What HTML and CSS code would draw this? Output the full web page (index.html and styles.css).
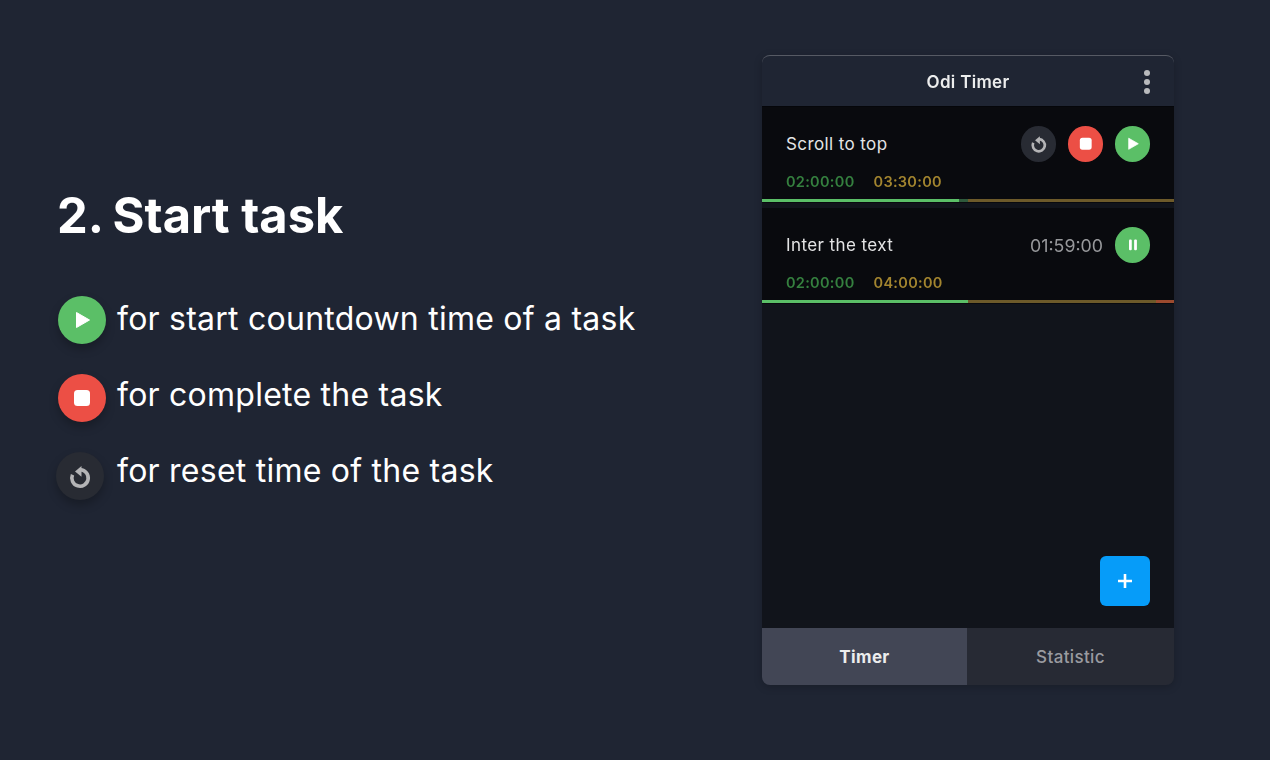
FILE: index.html
```html
<!DOCTYPE html>
<html lang="en">
<head>
<meta charset="UTF-8">
<title>Odi Timer - Start task</title>
<link rel="stylesheet" href="styles.css">
</head>
<body>

    <!-- Instructions -->
    <div class="intro">
        <h1 class="intro-title"><span class="intro-num">2.</span> Start task</h1>
        <div class="legend">
            <div class="legend-row">
                <span class="legend-icon legend-green">
                    <svg viewBox="0 0 48 48"><path d="M18.5 16.5v15L31.5 24z" fill="#fff" stroke="#fff" stroke-width="1" stroke-linejoin="round"/></svg>
                </span>
                <p>for start countdown time of a task</p>
            </div>
            <div class="legend-row">
                <span class="legend-icon legend-red">
                    <svg viewBox="0 0 48 48"><rect x="16" y="16" width="16" height="16" rx="3.5" fill="#fff"/></svg>
                </span>
                <p>for complete the task</p>
            </div>
            <div class="legend-row">
                <span class="legend-icon legend-grey">
                    <svg viewBox="0 0 48 48"><path d="M16.5 22.7A8.2 8.2 0 1 0 24.5 17.8" fill="none" stroke="#b4b4b6" stroke-width="3.6"/><path d="M25.5 14v10.7l-6.5-5.3z" fill="#b4b4b6"/></svg>
                </span>
                <p>for reset time of the task</p>
            </div>
        </div>
    </div>

    <!-- App window -->
    <div class="app">
        <div class="app-header">
            <span class="app-title">Odi Timer</span>
            <span class="app-menu"><i></i><i></i><i></i></span>
        </div>
        <div class="app-list">
            <div class="task">
                <div class="task-top">
                    <span class="task-name">Scroll to top</span>
                    <div class="task-actions">
                        <span class="btn btn-grey">
                            <svg viewBox="0 0 48 48"><path d="M16.5 22.7A8.2 8.2 0 1 0 24.5 17.8" fill="none" stroke="#b4b4b6" stroke-width="3.6"/><path d="M25.5 14v10.7l-6.5-5.3z" fill="#b4b4b6"/></svg>
                        </span>
                        <span class="btn btn-red">
                            <svg viewBox="0 0 48 48"><rect x="16" y="16" width="16" height="16" rx="3.5" fill="#fff"/></svg>
                        </span>
                        <span class="btn btn-green">
                            <svg viewBox="0 0 48 48"><path d="M18.5 16.5v15L31.5 24z" fill="#fff" stroke="#fff" stroke-width="1" stroke-linejoin="round"/></svg>
                        </span>
                    </div>
                </div>
                <div class="task-times">
                    <span class="time-green">02:00:00</span>
                    <span class="time-yellow">03:30:00</span>
                </div>
                <div class="bar">
                    <span class="bar-green" style="width: 47.8%"></span>
                    <span class="bar-teal" style="width: 2.2%"></span>
                    <span class="bar-yellow" style="width: 50%"></span>
                </div>
            </div>
            <div class="task">
                <div class="task-top">
                    <span class="task-name">Inter the text</span>
                    <div class="task-actions">
                        <span class="task-left">01:59:00</span>
                        <span class="btn btn-green">
                            <svg viewBox="0 0 36 36"><rect x="14.2" y="12.6" width="2.8" height="11" rx="1" fill="#fff"/><rect x="19.4" y="12.6" width="2.8" height="11" rx="1" fill="#fff"/></svg>
                        </span>
                    </div>
                </div>
                <div class="task-times">
                    <span class="time-green">02:00:00</span>
                    <span class="time-yellow">04:00:00</span>
                </div>
                <div class="bar">
                    <span class="bar-green" style="width: 50%"></span>
                    <span class="bar-yellow" style="width: 45.6%"></span>
                    <span class="bar-red" style="width: 4.4%"></span>
                </div>
            </div>
            <span class="add-button">
                <svg width="50" height="50" viewBox="0 0 50 50"><path d="M25 18v14M18 25h14" stroke="#fff" stroke-width="2.6"/></svg>
            </span>
        </div>
        <div class="app-tabs">
            <div class="tab tab-active">Timer</div>
            <div class="tab">Statistic</div>
        </div>
    </div>

</body>
</html>
```

FILE: styles.css
```css
body {
    background-color: #1f2533;
    color: #fff;
    font-family: 'Inter', sans-serif;
    margin: 0;
    height: 760px;
    overflow: hidden;
    display: flex;
    justify-content: space-between;
    align-items: flex-start;
    padding: 55px 96px 0 58px;
    box-sizing: border-box;
}

/* Instructions */
.intro {
    padding-top: 131px;
}

.intro-title {
    font-size: 48.8px;
    font-weight: 700;
    line-height: 60px;
    margin: 0 0 50px;
    text-indent: -1px;
}

.intro-num {
    margin-right: -3px;
}

.legend {
    display: flex;
    flex-direction: column;
    gap: 28px;
}

.legend-row {
    display: flex;
    align-items: flex-start;
    gap: 11px;
    height: 48px;
}

.legend-row p {
    font-size: 32px;
    line-height: 44px;
    letter-spacing: 0.24px;
    margin: 1px 0 0;
}

.legend-icon {
    width: 48px;
    height: 48px;
    border-radius: 50%;
    box-shadow: 0 5px 10px rgba(0, 0, 0, 0.25);
    flex-shrink: 0;
}

.legend-icon svg,
.btn svg {
    display: block;
    width: 100%;
    height: 100%;
}

.legend-green {
    background-color: #5bbf67;
}

.legend-red {
    background-color: #ec4f45;
    margin-top: 2px;
}

.legend-grey {
    background-color: #282b33;
    margin: 4px 2px 0 -2px;
}

/* App window */
.app {
    width: 412px;
    height: 630px;
    display: flex;
    flex-direction: column;
    border-radius: 8px;
    overflow: hidden;
    box-shadow: 0 2px 8px rgba(0, 0, 0, 0.2);
    border-top: 1px solid #565a64;
    box-sizing: border-box;
    background-color: #1f2533;
    filter: blur(0.3px);
}

.app-header {
    height: 51px;
    position: relative;
    display: flex;
    align-items: center;
    justify-content: center;
    flex-shrink: 0;
    border-bottom: 1px solid #05060a;
    box-sizing: border-box;
}

.app-title {
    font-size: 17px;
    font-weight: 600;
    letter-spacing: 0.3px;
    color: #eceded;
    padding-top: 2px;
}

.app-menu {
    position: absolute;
    right: 24px;
    top: 14px;
    display: flex;
    flex-direction: column;
    gap: 3px;
}

.app-menu i {
    width: 6px;
    height: 6px;
    border-radius: 50%;
    background-color: #b9babd;
}

.app-list {
    flex: 1;
    position: relative;
    background-color: #11141b;
    display: flex;
    flex-direction: column;
    gap: 5px;
}

.task {
    height: 96px;
    background-color: #090a0e;
    display: flex;
    flex-direction: column;
}

.task-top {
    display: flex;
    justify-content: space-between;
    align-items: center;
    padding: 19px 24px 0;
    height: 36px;
}

.task-name {
    font-size: 17px;
    letter-spacing: 0.4px;
    color: #e4e4e5;
}

.task-actions {
    display: flex;
    align-items: center;
    gap: 11.5px;
}

.task-left {
    font-size: 17.8px;
    color: #97989b;
}

.btn {
    width: 35.5px;
    height: 35.5px;
    border-radius: 50%;
}

.btn-grey {
    background-color: #282b33;
}

.btn-red {
    background-color: #ec4f45;
}

.btn-green {
    background-color: #5bbf67;
}

.task-times {
    display: flex;
    gap: 19px;
    padding: 11px 24px 0;
    font-size: 14.5px;
    font-weight: 600;
    line-height: 18px;
    letter-spacing: 0.3px;
}

.time-green {
    color: #35803f;
}

.time-yellow {
    color: #a3852f;
}

.bar {
    display: flex;
    height: 3px;
    margin-top: auto;
    margin-bottom: 1px;
}

.bar-green {
    background-color: #5bbf67;
}

.bar-teal {
    background-color: #2f5a3c;
}

.bar-yellow {
    background-color: #6d5a2a;
}

.bar-red {
    background-color: #9c4a2e;
}

.add-button {
    position: absolute;
    right: 24px;
    bottom: 22px;
    width: 50px;
    height: 50px;
    border-radius: 6px;
    background-color: #069cf9;
}

.app-tabs {
    display: flex;
    height: 57px;
    flex-shrink: 0;
}

.tab {
    flex: 1;
    display: flex;
    align-items: center;
    justify-content: center;
    background-color: #272a34;
    color: #9a9ba0;
    font-size: 17px;
    font-weight: 500;
    letter-spacing: 0.35px;
}

.tab-active {
    flex: 0 0 205px;
    background-color: #424655;
    color: #eceded;
    font-weight: 700;
}
```
